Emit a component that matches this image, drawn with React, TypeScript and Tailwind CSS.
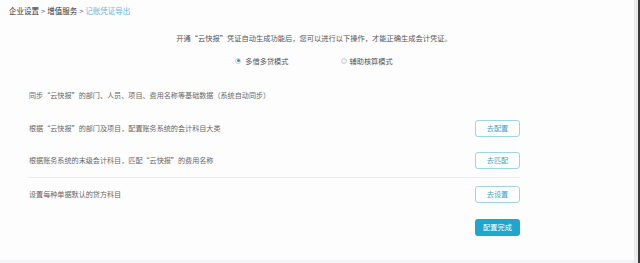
import React from "react";

const font = { fontFamily: '"Noto Sans CJK SC", "Noto Sans", sans-serif' };

function Row({ text, btn, divider }: { text: string; btn?: string; divider?: boolean }) {
  return (
    <div className={`ml-[28px] w-[492px] h-[33px] flex items-center justify-between ${divider ? "border-b border-[#ececec]" : ""}`}>
      <span className="pl-[1px] text-[7.1px] text-[#666] whitespace-nowrap">{text}</span>
      {btn && (
        <button className="w-[45px] h-[17px] rounded-[3px] border border-[#9dd5e3] bg-white text-[7.2px] text-[#3aa6c6] flex items-center justify-center">
          {btn}
        </button>
      )}
    </div>
  );
}

export default function App() {
  return (
    <div className="w-[640px] h-[263px] flex bg-[#f4f4f6] overflow-hidden" style={font}>
      <div className="w-[634px] h-[263px] flex flex-col">
        <div className="h-[260px] bg-[#fdfdfe] flex flex-col">
          <div className="h-[21px] pl-[9px] flex items-center gap-[2px] text-[7.5px] text-[#333] whitespace-nowrap">
            <span>企业设置</span>
            <span className="text-[#666]">&gt;</span>
            <span>增值服务</span>
            <span className="text-[#666]">&gt;</span>
            <span className="text-[#5fb8da]">记账凭证导出</span>
          </div>
          <div className="w-[628px] h-[12px] mt-[11px] flex items-center justify-center text-[7.25px] text-[#555] whitespace-nowrap">
            开通“云快报”凭证自动生成功能后，您可以进行以下操作，才能正确生成会计凭证。
          </div>
          <div className="w-[628px] h-[12px] mt-[11px] flex items-center justify-center text-[7.2px] text-[#555]">
            <div className="flex items-center gap-[4px]">
              <span className="w-[6px] h-[6px] rounded-full border border-[#bcd6e6] flex items-center justify-center">
                <span className="w-[3px] h-[3px] rounded-full bg-[#3c8fc9]" />
              </span>
              <span>多借多贷模式</span>
            </div>
            <div className="flex items-center gap-[3px] ml-[52px]">
              <span className="w-[6px] h-[6px] rounded-full border border-[#cfcfcf] bg-[#f2f2f2]" />
              <span>辅助核算模式</span>
            </div>
          </div>
          <div className="mt-[11.5px]">
            <Row text="同步“云快报”的部门、人员、项目、费用名称等基础数据（系统自动同步）" />
            <Row text="根据“云快报”的部门及项目，配置账务系统的会计科目大类" btn="去配置" />
            <Row text="根据账务系统的末级会计科目，匹配“云快报”的费用名称" btn="去匹配" divider />
            <Row text="设置每种单据默认的贷方科目" btn="去设置" />
            <div className="ml-[28px] w-[492px] h-[33px] flex items-center justify-end">
              <button className="w-[45px] h-[17px] rounded-[3px] bg-[#1fa6cc] text-[7.2px] text-white flex items-center justify-center">
                配置完成
              </button>
            </div>
          </div>
        </div>
      </div>
      <div className="w-[4px] h-full bg-[#ececee]" />
      <div className="w-[2px] h-full bg-[#3a3a3a]" />
    </div>
  );
}
